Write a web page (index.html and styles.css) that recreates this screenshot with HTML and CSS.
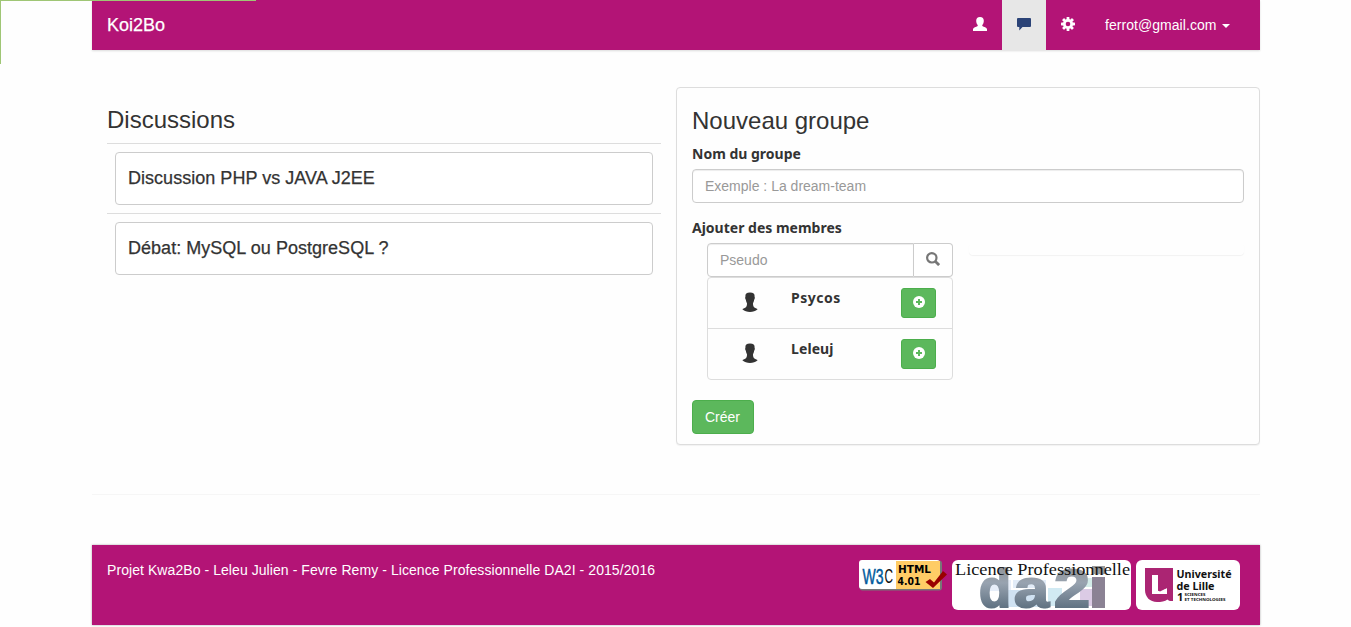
FILE: index.html
```html
<!DOCTYPE html>
<html lang="fr">
<head>
<meta charset="utf-8">
<title>Koi2Bo</title>
<link rel="stylesheet" href="styles.css">
</head>
<body>
<div class="corner"></div>
<div class="container">
  <nav class="navbar">
    <a class="brand">Koi2Bo</a>
    <div class="nav">
      <a class="nav-item"><svg width="14" height="14" viewBox="0 0 14 14"><path fill="#fff" d="M7 0c2.600 0 3.800 1.400 3.800 3.700 0 1.900-.6 3.300-1.500 4.300v1.100c1.800.9 4.200 1.500 4.700 3V14H0v-1.900c.5-1.500 2.900-2.100 4.700-3V8C3.800 7 3.200 5.600 3.200 3.700 3.200 1.400 4.400 0 7 0z"/></svg></a>
      <a class="nav-item active"><svg width="14" height="14" viewBox="0 0 14 14"><path fill="#2b4377" d="M1 1h12q1 0 1 1v7q0 1-1 1H5.500L2.300 13.500V10H1Q0 10 0 9V2Q0 1 1 1z"/></svg></a>
      <a class="nav-item"><svg width="14" height="14" viewBox="-7 -7 14 14"><g fill="#fff"><g id="t"><rect x="-1.400" y="-7" width="2.800" height="14" rx=".6"/><rect x="-7" y="-1.400" width="14" height="2.800" rx=".6"/></g><use href="#t" transform="rotate(45)"/><circle r="5"/></g><circle r="2.300" fill="#b31476"/></svg></a>
      <a class="nav-item user"><span class="mail">ferrot@gmail.com</span><span class="caret"></span></a>
    </div>
  </nav>
  <main class="row">
    <section class="discussions">
      <h3>Discussions</h3>
      <div class="cell"><a class="topic">Discussion PHP vs JAVA J2EE</a></div>
      <div class="cell"><a class="topic">Débat: MySQL ou PostgreSQL ?</a></div>
    </section>
    <section class="panel">
      <h3>Nouveau groupe</h3>
      <div class="label">Nom du groupe</div>
      <div class="input">Exemple : La dream-team</div>
      <div class="label second">Ajouter des membres</div>
      <div class="members">
        <div class="search-col">
          <div class="group">
            <div class="input search">Pseudo</div>
            <div class="addon"><svg width="14" height="14" viewBox="0 0 14 14" fill="none" stroke="#777"><circle cx="5.800" cy="5.800" r="4.700" stroke-width="2.200"/><path d="M9.200 9.200l3.900 3.900" stroke-width="2.800"/></svg></div>
          </div>
          <div class="list">
            <div class="member"><svg class="avatar" width="16" height="20" viewBox="0 0 16 20"><path fill="#333" d="M8 0.500c3.400 0 4.900 1.400 4.600 4.200.5.800.2 2.400-.5 3-.2 1.700-.6 2.700-1.100 3.500 0 2 .3 3.500 1.400 4.200 1.300.8 2.600 1 3.200 1.900C13.500 19 11 20 8 20S2.500 19 .4 17.300c.6-.9 1.900-1.100 3.200-1.900 1.100-.7 1.400-2.200 1.400-4.200C4.500 10.400 4.100 9.400 3.900 7.700c-.7-.6-1-2.200-.5-3C3.100 1.900 4.600.5 8 .5z"/></svg><b class="wide">Psycos</b><span class="add"><svg width="12" height="12" viewBox="0 0 12 12"><circle cx="6" cy="6" r="6" fill="#fff"/><path d="M6 3v6M3 6h6" stroke="#5cb85c" stroke-width="2"/></svg></span></div>
            <div class="member"><svg class="avatar" width="16" height="20" viewBox="0 0 16 20"><path fill="#333" d="M8 0.500c3.400 0 4.900 1.400 4.600 4.200.5.800.2 2.400-.5 3-.2 1.700-.6 2.700-1.100 3.500 0 2 .3 3.500 1.400 4.200 1.300.8 2.600 1 3.200 1.900C13.500 19 11 20 8 20S2.500 19 .4 17.300c.6-.9 1.900-1.100 3.200-1.900 1.100-.7 1.400-2.200 1.400-4.200C4.500 10.400 4.100 9.400 3.900 7.700c-.7-.6-1-2.200-.5-3C3.100 1.900 4.600.5 8 .5z"/></svg><b>Leleuj</b><span class="add"><svg width="12" height="12" viewBox="0 0 12 12"><circle cx="6" cy="6" r="6" fill="#fff"/><path d="M6 3v6M3 6h6" stroke="#5cb85c" stroke-width="2"/></svg></span></div>
          </div>
        </div>
        <div class="chosen"></div>
      </div>
      <a class="create">Créer</a>
    </section>
  </main>
  <div class="rule"></div>
  <footer class="footer">
    <p class="credit">Projet Kwa2Bo - Leleu Julien - Fevre Remy - Licence Professionnelle DA2I - 2015/2016</p>
    <div class="logos">
      <svg width="88" height="31" viewBox="0 0 88 31">
        <rect x=".5" y=".5" width="82.500" height="30" rx="3" fill="#777"/>
        <rect width="81" height="29" rx="3" fill="#fff"/><path d="M37 1h44v28H37z" fill="#fc6"/>
        <text x="3.500" y="23.500" class="w3" textLength="21" lengthAdjust="spacingAndGlyphs">W3</text>
        <text x="25.500" y="23" class="w3 c" textLength="8.500" lengthAdjust="spacingAndGlyphs">C</text>
        <text x="39" y="13" class="html" textLength="33" lengthAdjust="spacingAndGlyphs">HTML</text>
        <text x="38.500" y="25" class="html" textLength="23" lengthAdjust="spacingAndGlyphs">4.01</text>
        <path d="M66.500 22l4.500-3 4 3.500L84 11l4 3.500L74 28z" fill="#900"/>
      </svg>
      <svg width="179" height="50" viewBox="0 0 179 50">
        <defs><linearGradient id="dg" gradientUnits="userSpaceOnUse" x1="0" x2="0" y1="6" y2="48"><stop offset="0" stop-color="#929496"/><stop offset=".4" stop-color="#98a3b0"/><stop offset="1" stop-color="#607282"/></linearGradient></defs>
        <rect width="179" height="50" rx="6" fill="#fff"/>
        <g opacity=".8"><path d="M32 20h27v11H32z" fill="#e2ebf8"/><path d="M61 20h33v8H61z" fill="#dce8f7"/><path d="M56 30h38v17H56z" fill="#c5dcf0"/><path d="M96 28h14v18H96z" fill="#c6e6f1"/><path d="M128 18h14v9h-14z" fill="#c9e8e4"/><path d="M128 29h14v17h-14z" fill="#d3bfdf"/></g>
        <text x="27" y="47" class="da" textLength="32" lengthAdjust="spacingAndGlyphs">d</text>
        <text x="62" y="47" class="da" textLength="35" lengthAdjust="spacingAndGlyphs">a</text>
        <text x="102" y="47" class="da" textLength="36" lengthAdjust="spacingAndGlyphs">2</text>
        <path d="M140 6h13v8h-13z" fill="#999"/><path d="M140 17h13v31h-13z" fill="#8b8294"/>
        <text x="3" y="15" class="lp" textLength="175" lengthAdjust="spacingAndGlyphs">Licence Professionnelle</text>
      </svg>
      <svg width="104" height="50" viewBox="0 0 104 50">
        <rect width="104" height="50" rx="6" fill="#fff"/>
        <path d="M9 8h28v33c-3 .3-4-.2-5.500-1.500C29 41.500 25 42 21 42c-7 0-12-5-12-12z" fill="#ab2573"/>
        <path d="M16 15h6v16l9-3v6H16z" fill="#fff"/><path d="M22 30.500l2 1 7-3.500-1-1z" fill="#ab2573"/>
        <text x="40.500" y="17.500" class="ul" textLength="55" lengthAdjust="spacingAndGlyphs">Université</text>
        <text x="40.500" y="29.500" class="ul" textLength="38" lengthAdjust="spacingAndGlyphs">de Lille</text>
        <text x="41" y="41" class="ul">1</text>
        <text x="48.500" y="36" class="st" textLength="21" lengthAdjust="spacingAndGlyphs">SCIENCES</text>
        <text x="48.500" y="41.200" class="st" textLength="41" lengthAdjust="spacingAndGlyphs">ET TECHNOLOGIES</text>
      </svg>
    </div>
  </footer>
</div>
</body>
</html>
```
FILE: styles.css
```css
* { box-sizing: border-box; }
body { margin: 0; height: 627px; overflow: hidden; background: #fefefe; color: #333; font: 14px/20px "Liberation Sans", Arial, sans-serif; }
.corner { position: absolute; top: 0; left: 0; width: 256px; height: 64px; border-top: 1px solid #9fc675; border-left: 1px solid #9fc675; z-index: 2; }
.container { width: 1168px; margin-left: 92px; }
.navbar { height: 50px; background: #b31476; display: flex; justify-content: space-between; padding-left: 15px; color: #fff; box-shadow: 0 1px 2px rgba(0,0,0,.14); }
.brand { font-size: 18px; line-height: 50px; -webkit-text-stroke: .25px #fff; }
.nav { display: flex; height: 51px; }
.nav-item { display: flex; width: 44px; justify-content: center; padding-top: 17px; }
.active { background: #e7e7e7; }
.user { width: 170px; justify-content: flex-start; padding: 15px 0 0 15px; align-items: flex-start; }
.mail { letter-spacing: .05px; }
.caret { border: 4px solid transparent; border-top-color: #fff; border-bottom: 0; margin: 9px 0 0 6px; }
.row { display: flex; margin-top: 37px; }
.discussions { width: 584px; padding: 20px 15px 0; }
h3 { margin: 0; font-size: 24px; line-height: 26px; font-weight: 400; }
.discussions h3 { margin-bottom: 10px; }
.cell { width: 554px; height: 70px; border-top: 1px solid #ddd; padding: 8px; }
.topic { display: block; height: 53px; width: 538px; border: 1px solid #ccc; border-radius: 4px; padding: 15px 12px; font-size: 18px; line-height: 20px; letter-spacing: .03px; -webkit-text-stroke: .25px #333; background: #fff; }
.panel { width: 584px; height: 358px; border: 1px solid #ddd; border-radius: 4px; padding: 20px 15px 0; background: #fefefe; box-shadow: 0 1px 1px rgba(0,0,0,.05); }
.label, .member b { font-family: "Noto Sans", sans-serif; font-weight: 700; }
.label { margin-top: 10px; height: 20px; }
.input { width: 552px; height: 34px; border: 1px solid #ccc; border-radius: 4px; padding: 6px 12px; color: #999; background: #fff; box-shadow: inset 0 1px 1px rgba(0,0,0,.075); margin-top: 5px; }
.second { margin-top: 15px; }
.members { display: flex; gap: 16px; padding-left: 15px; margin-top: 5px; }
.search-col { width: 246px; }
.group { display: flex; }
.search { width: 207px; margin: 0; border-radius: 4px 0 0 4px; }
.addon { width: 39px; height: 34px; border: 1px solid #ccc; border-left: 0; border-radius: 0 4px 4px 0; display: flex; justify-content: center; padding-top: 8px; background: #fff; }
.list { border: 1px solid #ddd; border-radius: 4px; height: 103px; }
.member { display: flex; height: 50px; padding: 10px 16px 0 34px; }
.member + .member { height: 51px; border-top: 1px solid #ddd; }
.avatar { margin-top: 4px; }
.member b { margin-left: 33px; flex: 1; letter-spacing: .1px; }
.member .wide { letter-spacing: .5px; }
.add { width: 35px; height: 30px; background: #5cb85c; border: 1px solid #4cae4c; border-radius: 3px; display: flex; justify-content: center; padding-top: 7px; }
.chosen { width: 276px; height: 12px; border-radius: 4px; box-shadow: 0 1px 1px rgba(0,0,0,.05); }
.create { display: block; width: 62px; height: 34px; margin-top: 20px; border: 1px solid #4cae4c; border-radius: 4px; background: #5cb85c; color: #fff; padding: 6px 12px; }
.rule { height: 1px; margin-top: 49px; background: #f6f6f6; }
.footer { height: 80px; margin-top: 50px; background: #b31476; color: #fff; padding: 15px 20px 0 15px; display: flex; justify-content: space-between; box-shadow: 0 0 2px rgba(0,0,0,.35); }
.credit { margin: 0; letter-spacing: .068px; white-space: nowrap; }
.logos { display: flex; gap: 5px; }
.w3 { font: 22px "Liberation Sans", sans-serif; fill: #005a9c; stroke: #005a9c; stroke-width: .5px; }
.c { font-size: 21px; fill: #111; stroke: none; }
.html { font: bold 10px "DejaVu Sans", sans-serif; fill: #000; }
.da { font: bold 53px "Liberation Sans", sans-serif; fill: url(#dg); stroke: url(#dg); stroke-width: 2px; }
.lp { font: 17px "Liberation Serif", serif; fill: #111; }
.ul { font: bold 11px "Noto Sans", sans-serif; fill: #111; }
.st { font: bold 4px "Noto Sans", sans-serif; fill: #111; }
```
